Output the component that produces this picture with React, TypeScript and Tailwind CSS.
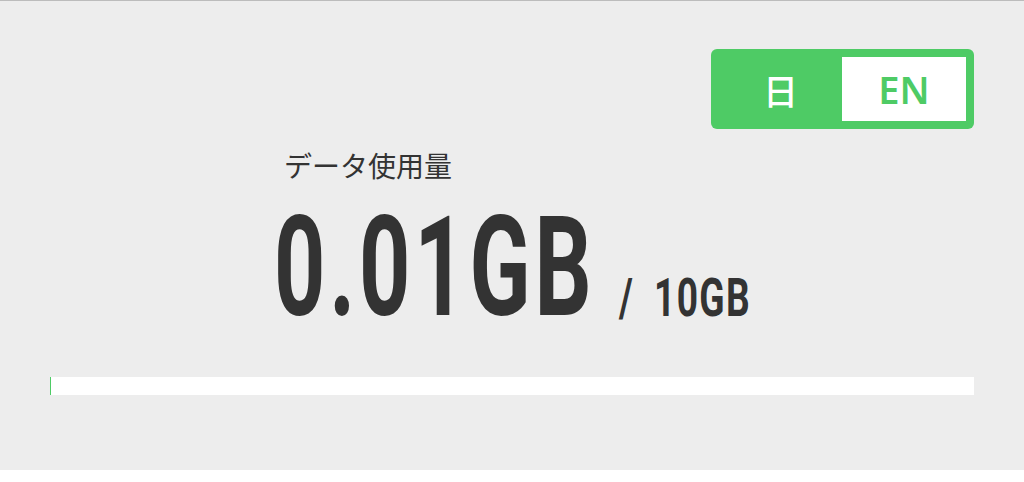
import React from "react";

export default function App() {
  return (
    <div className="w-full h-[482px] bg-white" style={{ fontFamily: '"Noto Sans", "Noto Sans CJK JP", sans-serif' }}>
      <div className="h-[470px] bg-[#ededed] border-t border-[#bcbcbc] px-[50px] pt-[48px] flex flex-col">
        <div className="flex justify-end">
          <div className="h-[80px] w-[263px] rounded-[6px] bg-[#4ecb65] p-[8px] flex">
            <div className="flex-1 flex items-center justify-center text-white text-[35px] leading-none font-medium" style={{ fontFamily: '"Noto Sans CJK JP", sans-serif' }}>
              日
            </div>
            <div className="w-[124px] bg-white flex items-center justify-center text-[#4ecb65] text-[38px] leading-none font-semibold">
              EN
            </div>
          </div>
        </div>
        <div className="flex justify-center">
          <div className="flex flex-col w-[476px]">
            <div className="pl-[10px] mt-[22px] text-[28px] leading-none text-[#333]" style={{ fontFamily: '"Noto Sans CJK JP", sans-serif' }}>
              データ使用量
            </div>
            <div className="flex items-end mt-[18px] text-[#333]" style={{ fontFamily: 'Roboto, "Liberation Sans", sans-serif' }}>
              <div className="w-[345px] h-[120px] relative">
                <span className="absolute left-0 bottom-[-6px] whitespace-nowrap font-bold text-[140px] leading-[0.8] origin-bottom-left scale-x-[0.64] tracking-[6px]">
                  0.01GB
                </span>
              </div>
              <div className="w-[131px] h-[40px] relative">
                <span className="absolute left-0 bottom-[-8px] whitespace-nowrap font-bold text-[53px] leading-none origin-bottom-left scale-x-[0.7]">
                  /
                </span>
                <span className="absolute left-[35px] bottom-[-8px] whitespace-nowrap font-bold text-[53px] leading-none origin-bottom-left scale-x-[0.7] tracking-[2px]">
                  10GB
                </span>
              </div>
            </div>
          </div>
        </div>
        <div className="mt-[60px] h-[18px] bg-white border-l border-[#4ecb65]"></div>
      </div>
    </div>
  );
}
